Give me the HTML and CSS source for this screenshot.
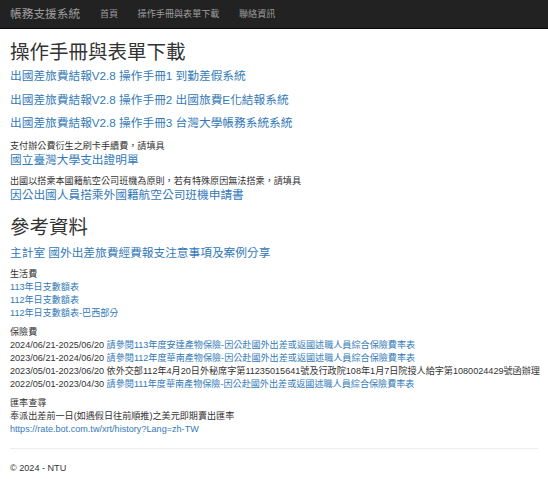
FILE: index.html
```html
<!DOCTYPE html>
<html lang="zh-Hant">
<head>
<meta charset="utf-8">
<title>帳務支援系統</title>
<link rel="stylesheet" href="styles.css">
</head>
<body>
<nav class="navbar">
  <a class="brand" href="#">帳務支援系統</a>
  <ul class="nav">
    <li><a href="#">首頁</a></li>
    <li><a href="#">操作手冊與表單下載</a></li>
    <li><a href="#">聯絡資訊</a></li>
  </ul>
</nav>
<main class="container">
  <h2 class="title">操作手冊與表單下載</h2>
  <h4 class="big-link"><a href="#">出國差旅費結報V2.8 操作手冊1 到勤差假系統</a></h4>
  <h4 class="big-link"><a href="#">出國差旅費結報V2.8 操作手冊2 出國旅費E化結報系統</a></h4>
  <h4 class="big-link"><a href="#">出國差旅費結報V2.8 操作手冊3 台灣大學帳務系統系統</a></h4>
  <p class="note">支付辦公費衍生之刷卡手續費，請填具</p>
  <h4 class="big-link tight"><a href="#">國立臺灣大學支出證明單</a></h4>
  <p class="note">出國以搭乘本國籍航空公司班機為原則，若有特殊原因無法搭乘，請填具</p>
  <h4 class="big-link tight"><a href="#">因公出國人員搭乘外國籍航空公司班機申請書</a></h4>

  <h2 class="title second">參考資料</h2>
  <h4 class="big-link"><a href="#">主計室 國外出差旅費經費報支注意事項及案例分享</a></h4>

  <div class="block">
    <div>生活費</div>
    <div><a href="#">113年日支數額表</a></div>
    <div><a href="#">112年日支數額表</a></div>
    <div><a href="#">112年日支數額表-巴西部分</a></div>
  </div>

  <div class="block">
    <div>保險費</div>
    <div class="line">2024/06/21-2025/06/20 <a href="#">請參閱113年度安達產物保險-因公赴國外出差或返國述職人員綜合保險費率表</a></div>
    <div class="line">2023/06/21-2024/06/20 <a href="#">請參閱112年度華南產物保險-因公赴國外出差或返國述職人員綜合保險費率表</a></div>
    <div class="line">2023/05/01-2023/06/20 依外交部112年4月20日外秘席字第11235015641號及行政院108年1月7日院授人給字第1080024429號函辦理</div>
    <div class="line">2022/05/01-2023/04/30 <a href="#">請參閱111年度華南產物保險-因公赴國外出差或返國述職人員綜合保險費率表</a></div>
  </div>

  <div class="block">
    <div>匯率查尋</div>
    <div>奉派出差前一日(如遇假日往前順推)之美元即期賣出匯率</div>
    <div><a href="#">https://rate.bot.com.tw/xrt/history?Lang=zh-TW</a></div>
  </div>

  <hr class="rule">
  <footer class="footer">© 2024 - NTU</footer>
</main>
</body>
</html>
```

FILE: styles.css
```css
* { box-sizing: border-box; }
html, body { margin: 0; padding: 0; }
body {
  font-family: "Liberation Sans", "Noto Sans CJK TC", Arial, sans-serif;
  font-size: 9.1px;
  line-height: 13px;
  color: #333;
  background: #fff;
}
a { color: #337ab7; text-decoration: none; }

.navbar {
  height: 29px;
  background: #222;
  border-bottom: 1px solid #080808;
  display: flex;
  align-items: center;
  padding-left: 10px;
}
.brand {
  color: #9d9d9d;
  font-size: 11.7px;
  line-height: 28px;
  margin-right: 10px;
}
.nav {
  list-style: none;
  margin: 0;
  padding: 0;
  display: flex;
}
.nav a {
  display: block;
  color: #9d9d9d;
  font-size: 9.1px;
  line-height: 28px;
  padding: 0 9.75px;
}

.container {
  padding: 0 10px;
}
.title {
  font-weight: 400;
  font-size: 19.5px;
  line-height: 22px;
  margin: 12px 0 6px 0;
}
.title.second { margin: 14px 0 8px 0; }
.big-link {
  font-weight: 400;
  font-size: 11.7px;
  line-height: 14px;
  margin: 0 0 9.5px 0;
}
.big-link.tight { margin-bottom: 8.5px; }
.note {
  margin: 0;
}
.block {
  margin: 0 0 6px 0;
}
.big-link + .block { margin-top: -2px; }
.line { white-space: nowrap; }
.rule {
  border: 0;
  border-top: 1px solid #eee;
  margin: 12px 0 13px 0;
}
.footer {
  line-height: 13px;
}
```
